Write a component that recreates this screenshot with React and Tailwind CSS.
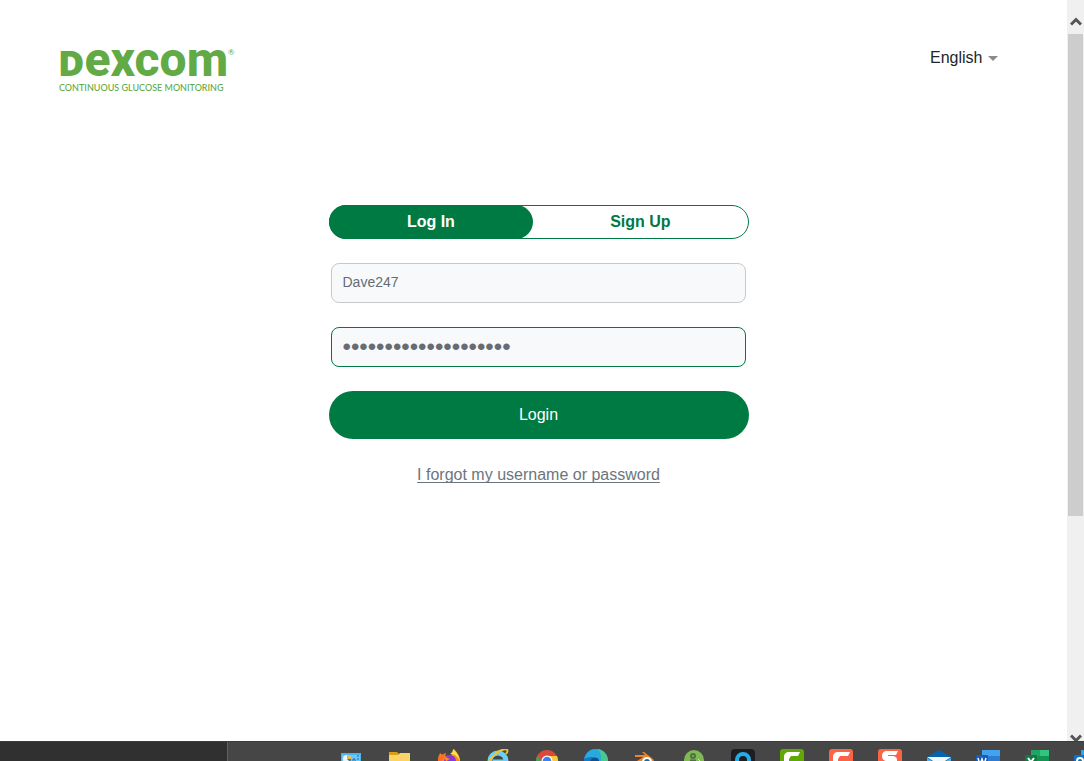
import React from "react";

function ControlPanelIcon() {
  return (
    <svg viewBox="0 0 24 24" className="size-6">
      <rect x="2" y="4" width="20" height="17" fill="#49b5ee" />
      <rect x="3" y="6" width="18" height="14" fill="#6cc9f5" />
      <circle cx="8" cy="10" r="4" fill="#eaf7fe" />
      <path d="M8 10V6a4 4 0 0 1 4 4z" fill="#f3b63a" />
      <path d="M8 10l3 3a4 4 0 0 0 1-3z" fill="#2a78c4" />
      <path d="M14 10h2v3h-2zM18 7h2M18 10h2" stroke="#1b6fb0" fill="#8fd5f7" />
    </svg>
  );
}

function FolderIcon() {
  return (
    <svg viewBox="0 0 24 24" className="size-6">
      <path d="M1 3h8l2 2h11v4H1z" fill="#dd9d13" />
      <path d="M1 6h9l2-2h10v17H1z" fill="#fcd466" />
    </svg>
  );
}

function FirefoxIcon() {
  return (
    <svg viewBox="0 0 24 24" className="size-6">
      <path d="M3 4l2 2c1-1 3-2 4-2l-1 3 7-1 2-6c3 3 6 7 6 12A11 11 0 0 1 1 13c0-4 1-6 2-9z" fill="#ff8a24" />
      <path d="M16 0c3 3 7 7 7 13-1-4-3-5-5-7l-5-1c2-1 3-3 3-5z" fill="#ffe14d" />
      <path d="M2 6l2 1c2-2 3-2 4-2L7 9l-5 6c-1-4-1-6 0-9z" fill="#ff6a25" />
      <circle cx="13" cy="12" r="6" fill="#8a38d5" />
      <path d="M7 9c2-1 4 0 6 1-2 1-3 1-3 3z" fill="#ff8a24" />
    </svg>
  );
}

function ExplorerIcon() {
  return (
    <svg viewBox="0 0 24 24" className="size-6">
      <circle cx="12" cy="12" r="8" fill="none" stroke="#6ad0f6" strokeWidth="5" />
      <path d="M7 12h12" stroke="#6ad0f6" strokeWidth="3" />
      <path d="M2 18C1 13 8 4 16 1c5-2 7 0 4 4" fill="none" stroke="#f3c22d" strokeWidth="2" />
    </svg>
  );
}

function ChromeIcon() {
  return (
    <svg viewBox="0 0 24 24" className="size-6">
      <circle cx="12" cy="12" r="11" fill="#d94a3d" />
      <path d="M2.500 6.500L8 15l4 8A11 11 0 0 1 2.500 6.500z" fill="#42a353" />
      <path d="M12 7h10a11 11 0 0 1-10 16l5-8z" fill="#f7ca3e" />
      <circle cx="12" cy="12" r="5.500" fill="#fff" />
      <circle cx="12" cy="12" r="4.300" fill="#3f7fe8" />
    </svg>
  );
}

function EdgeIcon() {
  return (
    <svg viewBox="0 0 24 24" className="size-6">
      <circle cx="12" cy="12" r="12" fill="#1678c8" />
      <path d="M0 10C2 3 6 0 12 0c7 0 12 5 12 12 0 3-3 4-6 4h-4c3-5-1-8-6-8-4 0-7 1-8 2z" fill="#28a9df" />
      <path d="M14 0c6 1 10 6 10 12 0 3-3 4-6 4h-3c3-5 3-10-1-16z" fill="#4cc88f" />
      <path d="M6 16c-1-6 3-8 7-7 2 1 3 4 1 6z" fill="#124f91" />
    </svg>
  );
}

function BlenderIcon() {
  return (
    <svg viewBox="0 0 24 24" className="size-6">
      <path d="M9 3l2 0 9 7a7 7 0 0 1-5 11c-5 0-8-3-8-7l-5 2-1-2 9-6H2V6h10z" fill="#e8872b" />
      <circle cx="14" cy="13" r="5" fill="#fff" />
      <circle cx="14" cy="13" r="3" fill="#23659f" />
    </svg>
  );
}

function GreenToolIcon() {
  return (
    <svg viewBox="0 0 24 24" className="size-6">
      <circle cx="12" cy="11" r="10" fill="#80b953" />
      <circle cx="11" cy="7" r="2" fill="none" stroke="#4f7043" strokeWidth="2" />
      <path d="M8 12h6" stroke="#4f7043" strokeWidth="3" />
      <path d="M16 10l4 4" stroke="#d4e8c4" strokeWidth="1" />
    </svg>
  );
}

function BlueRingIcon() {
  return (
    <svg viewBox="0 0 24 24" className="size-6">
      <rect width="24" height="24" rx="4" fill="#1d1e22" />
      <circle cx="12" cy="11" r="6" fill="none" stroke="#23aeea" strokeWidth="4" />
    </svg>
  );
}

function CamtasiaIcon() {
  return (
    <svg viewBox="0 0 24 24" className="size-6">
      <rect width="24" height="24" rx="3" fill="#61a805" />
      <path d="M20 3H9C6 3 4 5 4 8v10h5v-8l2-3h7z" fill="#fff" />
    </svg>
  );
}

function CaptureIcon() {
  return (
    <svg viewBox="0 0 24 24" className="size-6">
      <rect width="24" height="24" rx="3" fill="#fb6545" />
      <path d="M21 3H9C6 3 4 5 4 8v10h5v-8l2-3h8z" fill="#fff" />
    </svg>
  );
}

function SnagitIcon() {
  return (
    <svg viewBox="0 0 24 24" className="size-6">
      <rect width="24" height="24" rx="3" fill="#fb6545" />
      <path d="M20 2H9C6 2 4 4 4 7s2 5 5 5h5v6h5v-7c0-3-2-4-5-4h-4V6h8z" fill="#fff" />
    </svg>
  );
}

function MailIcon() {
  return (
    <svg viewBox="0 0 24 24" className="size-6">
      <path d="M0 8l12-7 12 7v14H0z" fill="#0763ae" />
      <path d="M0 8h24L12 16z" fill="#f2f8fc" />
      <path d="M0 9l12 7 12-7v13H0z" fill="#45b7f2" />
    </svg>
  );
}

function WordIcon() {
  return (
    <svg viewBox="0 0 24 24" className="size-6">
      <rect x="6" y="1" width="18" height="6" fill="#42a4ee" />
      <rect x="6" y="7" width="18" height="6" fill="#2b7cd3" />
      <rect x="6" y="13" width="18" height="10" fill="#185abd" />
      <rect y="6" width="12" height="13" rx="1" fill="#195abd" />
      <path d="M2 9l2 7 2-6 2 6 2-7" fill="none" stroke="#fff" strokeWidth="1.500" />
    </svg>
  );
}

function ExcelIcon() {
  return (
    <svg viewBox="0 0 24 24" className="size-6">
      <rect x="6" y="1" width="9" height="6" fill="#21a366" />
      <rect x="15" y="1" width="9" height="6" fill="#33c481" />
      <rect x="6" y="7" width="18" height="14" fill="#139453" />
      <rect y="6" width="12" height="13" rx="1" fill="#107c41" />
      <path d="M3 9l6 8M9 9l-6 8" fill="none" stroke="#fff" strokeWidth="2" />
    </svg>
  );
}

function OutlookIcon() {
  return (
    <svg viewBox="0 0 24 24" className="size-6">
      <rect x="7" y="1" width="16" height="20" fill="#28a8ea" />
      <rect y="6" width="12" height="13" rx="1" fill="#0f70c8" />
      <circle cx="6" cy="12" r="3" fill="none" stroke="#fff" strokeWidth="2" />
    </svg>
  );
}

const taskbarApps = [
  ["Control Panel", ControlPanelIcon],
  ["File Explorer", FolderIcon],
  ["Firefox", FirefoxIcon],
  ["Internet Explorer", ExplorerIcon],
  ["Chrome", ChromeIcon],
  ["Edge", EdgeIcon],
  ["Blender", BlenderIcon],
  ["Green tool", GreenToolIcon],
  ["Recorder", BlueRingIcon],
  ["Camtasia", CamtasiaIcon],
  ["Capture", CaptureIcon],
  ["Snagit", SnagitIcon],
  ["Mail", MailIcon],
  ["Word", WordIcon],
  ["Excel", ExcelIcon],
  ["Outlook", OutlookIcon],
];

function Logo() {
  return (
    <div className="text-[#62aa45]">
      <div className="flex h-[37px] items-baseline leading-8">
        <span className="font-['Noto_Sans',sans-serif] text-[36px] font-black">D</span>
        <span className="font-['Roboto',sans-serif] text-[48px] font-extrabold">excom</span>
        <span className="self-start font-['Lato',sans-serif] text-[8px] leading-4">®</span>
      </div>
      <p className="pl-px font-['Lato',sans-serif] text-[9px] leading-[14px] font-medium">
        CONTINUOUS GLUCOSE MONITORING
      </p>
    </div>
  );
}

function LanguagePicker() {
  return (
    <label className="relative flex items-center pt-[2px]">
      <select
        aria-label="Language"
        className="w-[68px] cursor-pointer appearance-none bg-transparent text-base leading-6 text-[#212529] outline-none"
      >
        <option>English</option>
      </select>
      <svg viewBox="0 0 10 5" className="pointer-events-none absolute right-0 h-[5px] w-[10px]">
        <path d="M0 0h10L5 5z" fill="#8b8b8b" />
      </svg>
    </label>
  );
}

function LoginForm() {
  return (
    <form className="flex w-full max-w-[420px] flex-col gap-6" onSubmit={(e) => e.preventDefault()}>
      <div className="flex h-[34px] rounded-full border border-[#007a43] text-base font-bold">
        <button
          type="button"
          className="-my-px -ml-px w-[49%] rounded-full bg-[#007a43] text-white"
        >
          Log In
        </button>
        <button type="button" className="flex-1 text-[#007a43]">
          Sign Up
        </button>
      </div>
      <input
        type="text"
        aria-label="Username"
        defaultValue="Dave247"
        className="mr-[3px] ml-[2px] h-10 rounded-lg border border-[#c8c9cb] bg-[#f8f9fb] px-[11px] pb-[2px] text-sm text-[#666c73] outline-none"
      />
      <input
        type="password"
        aria-label="Password"
        defaultValue="12345678901234567890"
        className="mr-[3px] ml-[2px] h-10 rounded-lg border border-[#007a43] bg-[#f8f9fb] px-[11px] text-2xl text-[#666c73] outline-none"
      />
      <button type="submit" className="h-12 rounded-full bg-[#007a43] text-base text-white">
        Login
      </button>
      <a
        href="#forgot"
        className="self-center text-base leading-6 text-[#6c757d] underline underline-offset-2 [text-decoration-skip-ink:none]"
      >
        I forgot my username or password
      </a>
    </form>
  );
}

function Scrollbar() {
  return (
    <div className="flex w-[17px] shrink-0 flex-col bg-[#f0f0f0]">
      <div className="flex h-[34px] shrink-0 items-end justify-center pb-2">
        <svg viewBox="0 0 12 9" className="h-[9px] w-3">
          <path d="M1 7.500L6 2.500l5 5" fill="none" stroke="#555" strokeWidth="3" />
        </svg>
      </div>
      <div className="mr-px ml-px h-[65%] bg-[#cdcdcd]" />
      <div className="mt-auto flex h-2 shrink-0 items-end justify-center">
        <svg viewBox="0 0 12 8" className="h-2 w-3">
          <path d="M1 2.500l5 5 5-5" fill="none" stroke="#555" strokeWidth="3" />
        </svg>
      </div>
    </div>
  );
}

function Taskbar() {
  return (
    <footer className="flex h-5 shrink-0 overflow-hidden border-t border-[#3c3c3c] bg-[#464646]">
      <div className="w-[228px] shrink-0 border-r border-[#606060] bg-[#303030]" />
      <nav aria-label="Taskbar" className="ml-[98px] flex">
        {taskbarApps.map(([name, Icon]) => (
          <button key={name} type="button" aria-label={name} className="flex h-9 w-[49px] shrink-0 justify-center pt-[7px]">
            <Icon />
          </button>
        ))}
      </nav>
    </footer>
  );
}

export default function App() {
  return (
    <div className="flex h-screen flex-col overflow-hidden bg-white font-['Liberation_Sans',Arial,sans-serif]">
      <div className="flex min-h-0 flex-1">
        <div className="flex min-w-0 flex-1 flex-col pr-12 pl-[58px]">
          <header className="mt-11 flex h-[49px] items-start justify-between pr-[21px]">
            <Logo />
            <LanguagePicker />
          </header>
          <main className="flex justify-center pt-28">
            <LoginForm />
          </main>
        </div>
        <Scrollbar />
      </div>
      <Taskbar />
    </div>
  );
}
